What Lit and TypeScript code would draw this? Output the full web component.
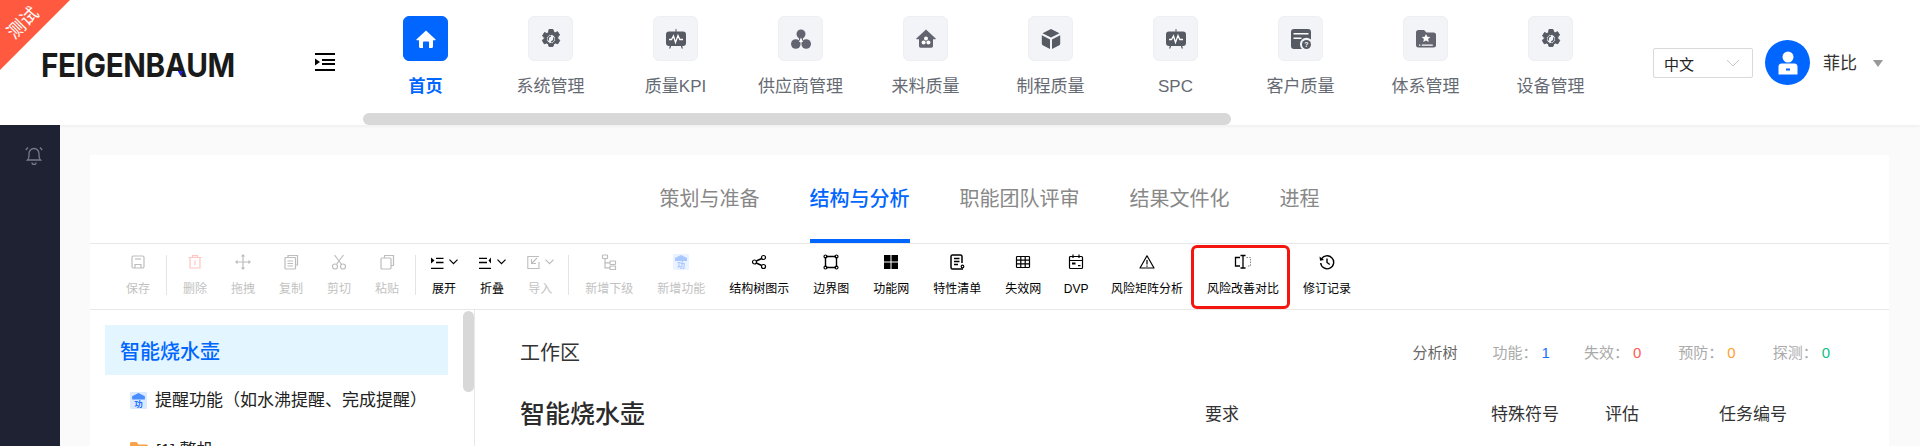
import { LitElement, html, css, svg, nothing } from "lit";
import { customElement } from "lit/decorators.js";

const navIcons: Record<string, any> = {
  home: svg`<path fill="#fff" d="M10 1.600.6 10.200c-.4.500-.1 1 .4 1H3v6.600c0 .7.500 1.200 1.200 1.200H7v-5.500c0-.6.4-1 1-1h4c.6 0 1 .4 1 1V19h2.800c.7 0 1.200-.5 1.200-1.200v-6.600h2c.5 0 .8-.5.4-1z"/>`,
  gear: svg`<path fill="#565a63" stroke="#565a63" stroke-linejoin="round" fill-rule="evenodd" d="M8 .5h4l.6 2.400 1.700.8 2.300-1 2 3.400-1.800 1.700v1.900l2 1.600-2 3.500-2.400-.8-1.700 1-.7 2.400H8l-.6-2.400-1.700-1-2.400.8-2-3.500 2-1.600V8.600L1.500 6.900l2-3.400 2.300 1 1.700-.8zM10 5.500a4.500 4.500 0 1 0 0 9 4.500 4.500 0 0 0 0-9z"/><path fill="none" stroke="#565a63" stroke-width="1.300" d="M7.600 11.500A2.800 2.800 0 0 1 10 7.200M12.400 8.500A2.800 2.800 0 0 1 10 12.800"/>`,
  monitor: svg`<path fill="#565a63" d="M3 2.500h14a3 3 0 0 1 3 3V14a3 3 0 0 1-3 3H3a3 3 0 0 1-3-3V5.500a3 3 0 0 1 3-3z"/><path fill="#565a63" d="M9.500 0h1v3h-1zM4 16.500h1.300l-1 3H3zM14.700 16.500H16l1 3h-1.300z"/><path fill="none" stroke="#fff" stroke-width="1.300" d="M3 10.500h2.500L7.500 7l2 6.500L12 6.500l1.800 4H17"/>`,
  tri: svg`<circle cx="10" cy="5" r="4.500" fill="#62656f"/><circle cx="4.800" cy="15" r="4.800" fill="#62656f"/><circle cx="15.200" cy="15" r="4.800" fill="#62656f"/><path fill="#62656f" d="M8 7h4v5H8z"/><path fill="#fff" d="M10 8.500l2 4.500H8z"/>`,
  house: svg`<path fill="#62656f" d="M10 .5.300 9.500c-.3.300-.1.800.3.800H3v6.700c0 1 .7 1.700 1.700 1.700h10.600c1 0 1.700-.7 1.700-1.700v-6.700h2.400c.4 0 .6-.5.300-.8z"/><circle cx="10" cy="9.500" r="2" fill="#fff"/><circle cx="7.600" cy="13.500" r="2" fill="#fff"/><circle cx="12.400" cy="13.500" r="2" fill="#fff"/>`,
  cube: svg`<path fill="#565a63" d="M10 0l8.500 4.200L10 8.400 1.500 4.200zM.8 6.300l8.200 4.100V20l-6.800-3.400A2.500 2.500 0 0 1 .8 14.400zM19.200 6.300v8.100c0 1-.5 1.800-1.400 2.200L11 20v-9.600z"/>`,
  card: svg`<path fill="#565a63" d="M3 0h14a3 3 0 0 1 3 3v7.500a6 6 0 0 0-9 9.500H3a3 3 0 0 1-3-3V3a3 3 0 0 1 3-3z"/><path fill="#fff" d="M2.500 4h15v1.400h-15zM2.500 8.500h8v1.400h-8z"/><circle cx="15.500" cy="15.500" r="4.500" fill="#565a63"/><text x="15.500" y="18" font-size="7" font-family="Liberation Sans" font-weight="700" fill="#fff" text-anchor="middle">?</text>`,
  folder: svg`<path fill="#62656f" d="M2.500 1h5.500l2.500 2.500h7a2.500 2.500 0 0 1 2.500 2.500v10a2.500 2.500 0 0 1-2.500 2.500h-15A2.500 2.500 0 0 1 0 16V3.500A2.500 2.500 0 0 1 2.500 1z"/><path fill="#fff" d="M10 5l1.300 2.800 3 .3-2.200 2 .6 3-2.700-1.500-2.700 1.500.6-3-2.200-2 3-.3z"/><path fill="#fff" d="M3 15.500h1.300v1.300H3zM5.800 15.500h11v1.300h-11z"/>`,
};

const navItems = [
  ["home", "首页", true],
  ["gear", "系统管理"],
  ["monitor", "质量KPI"],
  ["tri", "供应商管理"],
  ["house", "来料质量"],
  ["cube", "制程质量"],
  ["monitor", "SPC"],
  ["card", "客户质量"],
  ["folder", "体系管理"],
  ["gear", "设备管理"],
] as [string, string, boolean?][];

const S = (inner: any) => html`<svg width="16" height="16" viewBox="0 0 16 16" fill="none" stroke="currentColor" stroke-width="1.200">${inner}</svg>`;

const toolIcons: Record<string, any> = {
  save: S(svg`<path d="M3.500 2h9A1.500 1.500 0 0 1 14 3.500v9a1.500 1.500 0 0 1-1.500 1.500h-9A1.500 1.500 0 0 1 2 12.500v-9A1.500 1.500 0 0 1 3.500 2z"/><path d="M5 14v-3.500h6V14"/><path d="M5 5h6"/>`),
  del: S(svg`<path d="M1.500 3.500h13M5.500 3.500V1.700h5v1.800M3 3.500V14h10V3.500M8 6.500v4.500"/>`),
  drag: S(svg`<path d="M8 1.500v13M1.500 8h13"/><path fill="currentColor" stroke="none" d="M8 0l2.200 2.600H5.800zM8 16l2.200-2.600H5.800zM0 8l2.600-2.200v4.400zM16 8l-2.600-2.200v4.400z"/>`),
  copy: S(svg`<path d="M5 3V1.500h9.500V11H13"/><rect x="2" y="3.500" width="10.500" height="11.500" rx=".8"/><path d="M4.500 7h5.500M4.500 9.500h5.500M4.500 12h5.500"/>`),
  cut: S(svg`<circle cx="4" cy="12.500" r="2.500"/><circle cx="12" cy="12.500" r="2.500"/><path d="M5.300 10.500 12.500 1M10.700 10.500 3.500 1"/>`),
  paste: S(svg`<path d="M5.500 4V1.500h9v10H12"/><rect x="2" y="4" width="10" height="11" rx="1"/>`),
  expand: html`<svg width="13" height="14" viewBox="0 0 13 14" stroke="currentColor" stroke-width="1.300" fill="none"><path d="M0 13.300h12.500M5 3.300h7.500M5 7.500h7.500"/><path fill="currentColor" stroke="none" d="M0 2.500 3.500 5.500 0 8.500z"/></svg>`,
  fold: html`<svg width="13" height="14" viewBox="0 0 13 14" stroke="currentColor" stroke-width="1.300" fill="none"><path d="M0 13.300h12M0 3.300h8M0 7.500h8"/><path fill="currentColor" stroke="none" d="M12 2.500 9.500 5.500l2.500 3z"/></svg>`,
  imp: html`<svg width="13" height="14" viewBox="0 0 13 14" fill="none" stroke="currentColor" stroke-width="1.100"><path d="M12 1.500H.8v12H12V7"/><path d="M10 3 5 8M4.500 4v4.500H9"/></svg>`,
  sub: S(svg`<rect x="1.500" y="1" width="5" height="3.500" rx=".5"/><rect x="9" y="7" width="5.500" height="3.500" rx=".5"/><rect x="9" y="12" width="5.500" height="3.500" rx=".5"/><path d="M4 4.500V13.800H9M4 8.800H9"/>`),
  fn: html`<svg width="16" height="16" viewBox="0 0 16 16"><rect width="16" height="16" rx="1" fill="#eaf3ff"/><path fill="#a8c8ff" d="M8 1 2 4v3h12V4z"/><text x="8" y="14" font-size="8" font-weight="700" text-anchor="middle" fill="#a8c8ff" font-family="Noto Sans CJK SC">功</text></svg>`,
  tree: S(svg`<circle cx="3.500" cy="8" r="2"/><circle cx="12.500" cy="3.500" r="2"/><circle cx="12.500" cy="12.500" r="2"/><path d="M5.300 7 10.700 4.500M5.300 9l5.400 2.500" stroke-width="1.400"/>`),
  bound: S(svg`<path d="M3 2.500h10M3 13.500h10M2.500 3v10M13.500 3v10" stroke-width="1.400"/><circle cx="2.500" cy="2.500" r="1.500"/><circle cx="13.500" cy="2.500" r="1.500"/><circle cx="2.500" cy="13.500" r="1.500"/><circle cx="13.500" cy="13.500" r="1.500"/>`),
  net: html`<svg width="16" height="16" viewBox="0 0 16 16" fill="#000"><path d="M1 1h6.500v6.500H1zM8.500 1H15v6.500H8.500zM1 8.500h6.500V15H1zM8.500 8.500H15V15H8.500z"/></svg>`,
  list: S(svg`<path d="M13 9V2.500A1.500 1.500 0 0 0 11.500 1h-8A1.500 1.500 0 0 0 2 2.500v11A1.500 1.500 0 0 0 3.500 15H14" stroke-width="1.500"/><path d="M5 4.500h5.500M5 7.500h5.500M5 10.500h4" stroke-width="1.300"/><circle cx="13.500" cy="12.500" r="1.300" />`),
  grid: S(svg`<rect x="1.500" y="2.500" width="13" height="11" rx=".8"/><path d="M1.500 6.200h13M1.500 9.800h13M5.800 2.500v11M10.200 2.500v11"/>`),
  dvp: S(svg`<rect x="1.500" y="2.500" width="13" height="12" rx="1"/><path d="M1.500 6.500h13M5 .5v3.500M11 .5v3.500"/><path fill="currentColor" stroke="none" d="M4 8.500h3.500v2H4zM10 11h2.500v1.300H10z"/>`),
  warn: S(svg`<path d="M8 1.800 1 14h14z" stroke-linejoin="round"/><path d="M8 6v4.500M8 11.500v1.300"/>`),
  cmp: html`<svg width="18" height="16" viewBox="0 0 18 16" fill="none" stroke="currentColor"><path d="M6 3.500H1.500v8.500H6" stroke-width="1.300"/><path d="M6.500 1.500h5M6.500 14h5M9 1.500V14" stroke-width="1.300"/><path d="M12.500 3.500h4v8.500h-4" stroke-width=".9" stroke-dasharray="1.500 1.200" stroke="#777"/></svg>`,
  hist: S(svg`<path d="M2.300 5.500A6.500 6.500 0 1 1 1.700 9" stroke-width="1.400"/><path fill="currentColor" stroke="none" d="M.5 2.500 1 6.800 5 6z"/><path d="M8 4.500V8.500l2.800 2" stroke-width="1.400"/>`),
};

type Tool = { i: string; t: string; off?: boolean; caret?: boolean; red?: boolean; mark?: boolean; tight?: boolean };
const toolGroups: Tool[][] = [
  [{ i: "save", t: "保存", off: true }],
  [
    { i: "del", t: "删除", off: true, red: true },
    { i: "drag", t: "拖拽", off: true },
    { i: "copy", t: "复制", off: true },
    { i: "cut", t: "剪切", off: true },
    { i: "paste", t: "粘贴", off: true },
  ],
  [
    { i: "expand", t: "展开", caret: true },
    { i: "fold", t: "折叠", caret: true },
    { i: "imp", t: "导入", off: true, caret: true },
  ],
  [
    { i: "sub", t: "新增下级", off: true },
    { i: "fn", t: "新增功能", off: true },
    { i: "tree", t: "结构树图示" },
    { i: "bound", t: "边界图" },
    { i: "net", t: "功能网" },
    { i: "list", t: "特性清单" },
    { i: "grid", t: "失效网" },
    { i: "dvp", t: "DVP", tight: true },
    { i: "warn", t: "风险矩阵分析" },
    { i: "cmp", t: "风险改善对比", mark: true },
    { i: "hist", t: "修订记录" },
  ],
];

const stats = [
  ["功能：", "1", "c-blue"],
  ["失效：", "0", "c-red"],
  ["预防：", "0", "c-orange"],
  ["探测：", "0", "c-green"],
];

@customElement("app-root")
export class AppRoot extends LitElement {
  static styles = css`
    :host {
      display: block;
      width: 1920px;
      height: 446px;
      overflow: hidden;
      position: relative;
      background: #fafafa;
      font-family: "Liberation Sans", "Noto Sans CJK SC", sans-serif;
    }
    .ribbon {
      position: absolute;
      left: 0;
      top: 0;
      width: 70px;
      height: 70px;
      background: #ff5a3f;
      clip-path: polygon(0 0, 100% 0, 0 100%);
    }
    .ribbon span {
      position: absolute;
      left: 3px;
      top: 12px;
      width: 40px;
      text-align: center;
      color: #fff;
      font-size: 18px;
      line-height: 22px;
      transform: rotate(-45deg);
    }
    header {
      height: 125px;
      background: #fff;
      display: flex;
      box-shadow: 0 1px 4px rgba(0, 0, 0, 0.06);
      position: relative;
    }
    .logo {
      width: 315px;
      flex: none;
      box-sizing: border-box;
      padding: 47px 0 0 41px;
    }
    .logo span {
      display: inline-block;
      position: relative;
      font-family: "Inter", sans-serif;
      font-weight: 700;
      font-size: 33px;
      line-height: 36px;
      color: #1a1a1a;
      transform-origin: 0 50%;
      transform: scaleX(0.9);
      letter-spacing: -0.4px;
    }
    .logo i {
      position: absolute;
      left: 152px;
      top: 24px;
      border-left: 3px solid transparent;
      border-right: 3px solid transparent;
      border-top: 5px solid #1f1fe0;
    }
    .menu {
      width: 48px;
      flex: none;
      padding-top: 53px;
    }
    .nav {
      width: 1290px;
      flex: none;
      display: flex;
      flex-direction: column;
      overflow: hidden;
    }
    .nav-items {
      display: flex;
      height: 113px;
    }
    .nav-item {
      width: 125px;
      flex: none;
      display: flex;
      flex-direction: column;
      align-items: center;
      padding-top: 16px;
      box-sizing: border-box;
      color: #666a73;
      font-size: 17px;
    }
    .nav-item.on {
      color: #0066ff;
      font-weight: 700;
    }
    .nav-icon {
      width: 45px;
      height: 45px;
      box-sizing: border-box;
      border-radius: 6px;
      background: #f3f4f8;
      border: 1px solid #eeeff2;
      display: flex;
      align-items: center;
      justify-content: center;
    }
    .on .nav-icon {
      background: #0066ff;
      border-color: #0066ff;
    }
    .nav-label {
      margin-top: 14px;
      line-height: 24px;
      white-space: nowrap;
    }
    .thumb {
      width: 868px;
      height: 12px;
      border-radius: 6px;
      background: #d8d8d8;
    }
    .lang {
      margin-top: 48px;
      width: 100px;
      height: 30px;
      box-sizing: border-box;
      border: 1px solid #d9d9d9;
      border-radius: 2px;
      display: flex;
      align-items: center;
      justify-content: space-between;
      padding: 0 12px 0 10px;
      font-size: 15px;
      color: #222;
      flex: none;
    }
    .avatar {
      margin: 40px 0 0 12px;
      width: 45px;
      height: 45px;
      border-radius: 50%;
      background: #0066ff;
      display: flex;
      align-items: center;
      justify-content: center;
      flex: none;
    }
    .name {
      margin: 52px 0 0 13px;
      font-size: 17px;
      line-height: 24px;
      color: #333;
      flex: none;
    }
    .caret {
      margin: 60px 0 0 16px;
      width: 0;
      height: 0;
      border-left: 5.5px solid transparent;
      border-right: 5.5px solid transparent;
      border-top: 7px solid #999;
    }
    .body {
      display: flex;
      height: 321px;
    }
    aside {
      width: 60px;
      flex: none;
      background: #1e2233;
      display: flex;
      justify-content: center;
      padding: 20px 0 0 8px;
      box-sizing: border-box;
    }
    aside svg {
      flex: none;
    }
    main {
      flex: 1;
      padding: 30px 31px 0 30px;
      min-width: 0;
    }
    .card {
      background: #fff;
      height: 400px;
    }
    .tabs {
      height: 88px;
      display: flex;
      justify-content: center;
      gap: 50px;
      border-bottom: 1px solid #e8e8e8;
    }
    .tab {
      font-size: 20px;
      line-height: 28px;
      padding-top: 30px;
      height: 88px;
      box-sizing: border-box;
      color: #888;
    }
    .tab.on {
      color: #0066ff;
      font-weight: 500;
      border-bottom: 4px solid #0066ff;
    }
    .tools {
      height: 65px;
      display: flex;
      border-bottom: 1px solid #e8e8e8;
      padding-left: 24px;
    }
    .group {
      display: flex;
    }
    .sep {
      width: 1px;
      height: 40px;
      margin: 11px 4px 0;
      background: #e4e4e4;
      flex: none;
    }
    .tool {
      position: relative;
      padding: 9px 12px 0;
      display: flex;
      flex-direction: column;
      align-items: center;
      font-size: 12px;
      line-height: 16px;
      color: #000;
      white-space: nowrap;
      box-sizing: border-box;
    }
    .tool.tight {
      padding-left: 10.5px;
      padding-right: 10.5px;
    }
    .tool.off {
      color: #c2c2c2;
    }
    .tool.off svg {
      color: #bdbdbd;
    }
    .tool.red svg {
      color: #ffc6c2;
    }
    .tool-icon {
      height: 17px;
      display: flex;
      align-items: center;
      gap: 5px;
    }
    .tool-icon.wide {
      margin: 0 -3px;
    }
    .tool-text {
      margin-top: 11px;
    }
    .tool.mark::after {
      content: "";
      position: absolute;
      left: -4px;
      top: 1px;
      right: 1px;
      bottom: 0;
      border: 3px solid #f5150f;
      border-radius: 6px;
    }
    .content {
      display: flex;
      height: 300px;
    }
    .tree {
      width: 385px;
      flex: none;
      box-sizing: border-box;
      border-right: 1px solid #e8e8e8;
      padding: 15px 0 0 15px;
      position: relative;
    }
    .vbar {
      position: absolute;
      left: 373px;
      top: 1px;
      width: 11px;
      height: 81px;
      border-radius: 6px;
      background: #d8d8d8;
    }
    .root {
      width: 343px;
      height: 50px;
      box-sizing: border-box;
      background: #e3f5ff;
      padding-left: 15px;
      display: flex;
      align-items: center;
      color: #0066ff;
      font-size: 20px;
      font-weight: 500;
    }
    .node {
      display: flex;
      align-items: center;
      font-size: 17px;
      color: #222;
      height: 50px;
      padding-left: 25px;
      gap: 8px;
      white-space: nowrap;
    }
    .node span {
      margin-bottom: 4px;
    }
    .work {
      flex: 1;
      padding: 0 59px 0 45px;
      min-width: 0;
    }
    .work-top {
      display: flex;
      align-items: center;
      justify-content: space-between;
      height: 44px;
      margin-top: 19px;
    }
    .work-title {
      font-size: 20px;
      color: #333;
    }
    .stats {
      display: flex;
      align-items: center;
      font-size: 15px;
      color: #aaa;
    }
    .stats .tree-label {
      color: #666;
      margin-right: 35px;
    }
    .stat {
      margin-right: 37px;
    }
    .stat:nth-child(2) {
      margin-right: 34px;
    }
    .stat:last-child {
      margin-right: 0;
    }
    .stat b {
      font-weight: 400;
      margin-left: 4px;
    }
    .c-blue { color: #1a6fff; }
    .c-red { color: #ff5a54; }
    .c-orange { color: #ff9f2e; }
    .c-green { color: #12c07f; }
    .cols {
      display: grid;
      grid-template-columns: 685px 286px 114px 1fr;
      margin-top: 19px;
      font-size: 17px;
      color: #333;
      align-items: center;
      height: 40px;
    }
    .cols .big {
      font-size: 25px;
      font-weight: 500;
      color: #2b2b2b;
    }
    .last-cell {
      display: flex;
      gap: 80px;
    }
    h1 { margin: 0; font: inherit; }
  `;

  private tool(t: Tool) {
    return html`<div class="tool ${t.off ? "off" : ""} ${t.red ? "red" : ""} ${t.mark ? "mark" : ""} ${t.tight ? "tight" : ""}">
      <div class="tool-icon ${t.caret ? "wide" : ""}">
        ${toolIcons[t.i]}
        ${t.caret
          ? html`<svg width="9" height="6" viewBox="0 0 9 6" fill="none" stroke="currentColor" stroke-width="1.200"><path d="M.5.700l4 4 4-4"/></svg>`
          : nothing}
      </div>
      <div class="tool-text">${t.t}</div>
    </div>`;
  }

  render() {
    return html`
      <header>
        <div class="logo"><span>FEIGENBAUM<i></i></span></div>
        <div class="menu">
          <svg width="20" height="18" viewBox="0 0 20 18" stroke="#000" stroke-width="2" fill="none">
            <path d="M0 1h20M7 7h13M7 11h13M0 17h20"/>
            <path fill="#000" stroke="none" d="M0 5.500 5 9l-5 3.500z"/>
          </svg>
        </div>
        <nav class="nav">
          <div class="nav-items">
            ${navItems.map(
              ([ic, label, on]) => html`<div class="nav-item ${on ? "on" : ""}">
                <div class="nav-icon">
                  <svg width="20" height="20" viewBox="0 0 20 20">${navIcons[ic]}</svg>
                </div>
                <div class="nav-label">${label}</div>
              </div>`
            )}
          </div>
          <div class="thumb"></div>
        </nav>
        <div class="lang">
          <span>中文</span>
          <svg width="14" height="8" viewBox="0 0 14 8" fill="none" stroke="#c8c8c8" stroke-width="1"><path d="M1 1l6 6 6-6"/></svg>
        </div>
        <div class="avatar">
          <svg width="20" height="24" viewBox="0 0 20 24">
            <circle cx="10" cy="6" r="5.500" fill="#fff"/>
            <path fill="#fff" fill-rule="evenodd" d="M3.500 12.500h13c1.500 0 3 1.200 3 3V23.500H.5V15.500c0-1.800 1.500-3 3-3zM8 17.500v2h4v-2z"/>
          </svg>
        </div>
        <div class="name">菲比</div>
        <div class="caret"></div>
      </header>
      <div class="ribbon"><span>测试</span></div>
      <div class="body">
        <aside>
          <svg width="20" height="20" viewBox="0 0 20 20" fill="none" stroke="#787c8a" stroke-width="1.300">
            <path d="M3.500 15c1-1 1.500-2 1.500-4.500V8.500a5 5 0 0 1 10 0v2c0 2.500.5 3.500 1.500 4.500z"/>
            <path d="M8 17.500a2 2 0 0 0 4 0M4 2.500 1.800 5M16 2.500 18.200 5"/>
          </svg>
        </aside>
        <main>
          <div class="card">
            <div class="tabs">
              <div class="tab">策划与准备</div>
              <div class="tab on">结构与分析</div>
              <div class="tab">职能团队评审</div>
              <div class="tab">结果文件化</div>
              <div class="tab">进程</div>
            </div>
            <div class="tools">
              ${toolGroups.map(
                (g, i) => html`${i ? html`<div class="sep"></div>` : nothing}
                  <div class="group">${g.map((t) => this.tool(t))}</div>`
              )}
            </div>
            <div class="content">
              <div class="tree">
                <div class="vbar"></div>
                <div class="root">智能烧水壶</div>
                <div class="node">
                  <svg width="17" height="17" viewBox="0 0 16 16">
                    <rect width="16" height="16" rx="1" fill="#dbeaff"/>
                    <path fill="#4a8dff" d="M8 1 2 4v3h12V4z"/>
                    <text x="8" y="14" font-size="8" font-weight="700" text-anchor="middle" fill="#1a6fff" font-family="Noto Sans CJK SC">功</text>
                  </svg>
                  <span>提醒功能（如水沸提醒、完成提醒）</span>
                </div>
                <div class="node">
                  <svg width="18" height="16" viewBox="0 0 18 16">
                    <path fill="#f9a24a" d="M1.500 0h5l2 2.500h8A1.500 1.500 0 0 1 18 4v10.500a1.500 1.500 0 0 1-1.500 1.500h-15A1.500 1.500 0 0 1 0 14.500v-13A1.500 1.500 0 0 1 1.500 0z"/>
                  </svg>
                  <span>[1] 整机</span>
                </div>
              </div>
              <div class="work">
                <div class="work-top">
                  <h1 class="work-title">工作区</h1>
                  <div class="stats">
                    <span class="tree-label">分析树</span>
                    ${stats.map(
                      ([l, v, c]) => html`<span class="stat">${l}<b class="${c}">${v}</b></span>`
                    )}
                  </div>
                </div>
                <div class="cols">
                  <div class="big">智能烧水壶</div>
                  <div>要求</div>
                  <div>特殊符号</div>
                  <div class="last-cell"><span>评估</span><span>任务编号</span></div>
                </div>
              </div>
            </div>
          </div>
        </main>
      </div>
    `;
  }
}
